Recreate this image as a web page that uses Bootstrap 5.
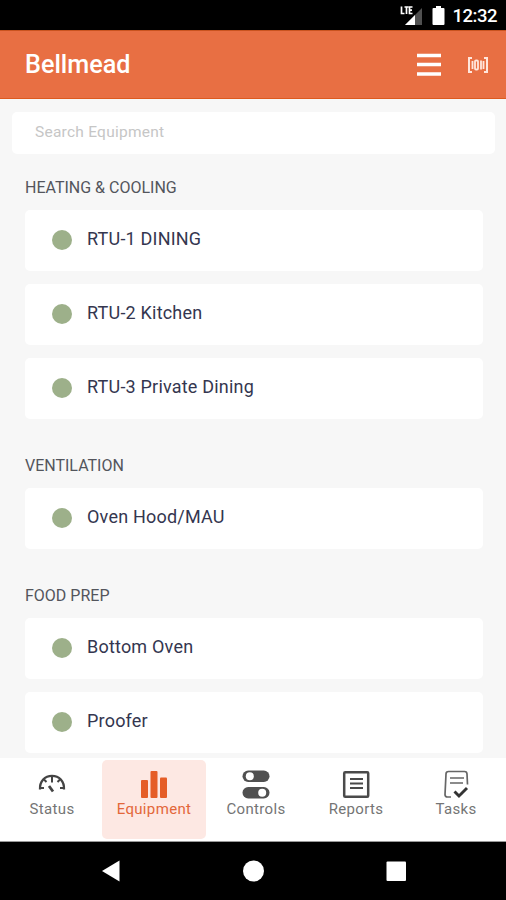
<!DOCTYPE html>
<html lang="en">
<head>
<meta charset="utf-8">
<meta name="viewport" content="width=device-width, initial-scale=1">
<title>Bellmead</title>
<link href="https://cdn.jsdelivr.net/npm/bootstrap@5.3.0/dist/css/bootstrap.min.css" rel="stylesheet">
<style>
body{font-family:Roboto,"Liberation Sans",sans-serif;background:#f7f7f7;color:#34364f}
svg{display:block;flex:none}
.screen{height:900px}
.statusbar{height:30px;background:#000;padding-right:9px}
.clock{font-size:18.5px;font-weight:500;line-height:30px;margin-left:8px;padding-top:2px;letter-spacing:-.5px}
.appbar{height:69px;background:#e86f43;border-top:1px solid #c9531f;border-bottom:1px solid #dd5a1e;padding:0 17px 0 25px}
.appbar h1{font-size:25.2px;font-weight:500;line-height:68px}
.scan{margin-left:25px}
.search{height:42px;margin:13px 11px 0 12px;padding:0 23px 3px;font-size:15.5px;letter-spacing:.25px;border:0;border-radius:5px;background:#fff;width:483px}
.search::placeholder{color:#c6c6c6;opacity:1}
.group-title{font-size:16px;line-height:44px;padding-top:2px;font-weight:400;color:#53555c}
.group{padding:0 23px 0 25px;margin-bottom:23px}
.group-first{margin-top:10px}
.rows{gap:13px}
.item{height:61px;border-radius:5px;background:#fff;padding:0 0 1px 27px}
.dot{width:20px;height:20px;border-radius:50%;background:#9db08a;margin-right:15px}
.item span{font-size:18px;letter-spacing:.2px;margin-top:-3px}
.tabs{height:84px;background:#fff;border-bottom:1px solid #999;padding-left:2px}
.tab{width:100px;padding-top:11px;font-size:15px;letter-spacing:.35px;line-height:18px;color:#757575;text-decoration:none}
.tab.active{width:104px;height:79px;margin-top:2px;padding-top:9px;border-radius:5px;background:#fde8e3;color:#e3673a}
.tab svg{margin-bottom:1px}
.sysnav{height:58px;background:#000}
</style>
<script src="https://cdn.jsdelivr.net/npm/bootstrap@5.3.0/dist/js/bootstrap.bundle.min.js"></script>
</head>
<body>
<div class="screen d-flex flex-column overflow-hidden">
  <div class="statusbar d-flex align-items-center justify-content-end text-white flex-shrink-0">
    <svg width="24" height="22" viewBox="0 0 24 22"><path d="M5 21 22 4V21Z" fill="#505050"/><path d="M5 21 15 11V21Z" fill="#fff"/><path d="M1.500 2.500V9.500H4.500M4.500 3H8.500M6.500 3V10M12.500 3H9.500V9.500H12.500M9.500 6.200H12" fill="none" stroke="#fff" stroke-width="1.700"/></svg>
    <svg class="ms-2" width="13" height="19" viewBox="0 0 13 19"><path d="M4 0H9V2H11.500Q12.500 2 12.500 3V18Q12.500 19 11.500 19H1.500Q.5 19 .5 18V3Q.5 2 1.500 2H4Z" fill="#fff"/></svg>
    <span class="clock">12:32</span>
  </div>
  <header class="appbar d-flex align-items-center text-white flex-shrink-0">
    <h1 class="m-0 me-auto">Bellmead</h1>
    <svg width="26" height="24" viewBox="0 0 26 24"><path d="M1 2.500H25M1 11.500H25M1 21H25" stroke="#fff" stroke-width="3.600"/></svg>
    <svg class="scan" width="22" height="18" viewBox="0 0 22 18" fill="none" stroke="#ffe6dc"><path d="M5 2H2V16H5M17 2H20V16H17" stroke-width="2"/><path d="M5.500 5V13M16.500 5V13M14 4.500V13.500" stroke-width="1.800"/><rect x="8" y="4.500" width="3" height="9" rx="1" stroke-width="1.800"/></svg>
  </header>
  <main class="flex-fill overflow-hidden">
    <input class="search d-block" type="text" placeholder="Search Equipment" aria-label="Search Equipment">
    <section class="group group-first">
      <h2 class="group-title m-0">HEATING &amp; COOLING</h2>
      <div class="rows d-flex flex-column">
        <div class="item d-flex align-items-center"><i class="dot"></i><span>RTU-1 DINING</span></div>
        <div class="item d-flex align-items-center"><i class="dot"></i><span>RTU-2 Kitchen</span></div>
        <div class="item d-flex align-items-center"><i class="dot"></i><span>RTU-3 Private Dining</span></div>
      </div>
    </section>
    <section class="group">
      <h2 class="group-title m-0">VENTILATION</h2>
      <div class="rows d-flex flex-column">
        <div class="item d-flex align-items-center"><i class="dot"></i><span>Oven Hood/MAU</span></div>
      </div>
    </section>
    <section class="group mb-0">
      <h2 class="group-title m-0">FOOD PREP</h2>
      <div class="rows d-flex flex-column">
        <div class="item d-flex align-items-center"><i class="dot"></i><span>Bottom Oven</span></div>
        <div class="item d-flex align-items-center"><i class="dot"></i><span>Proofer</span></div>
      </div>
    </section>
  </main>
  <nav class="tabs d-flex flex-shrink-0">
    <a class="tab d-flex flex-column align-items-center" href="#">
      <svg width="28" height="30" viewBox="0 0 28 30" fill="none" stroke="#444" stroke-width="2"><path d="M2 20.500C1.500 12 7 6.800 14 6.800S26.500 12 26 20.500" stroke-width="2.300"/><path d="M14 7V13.500M6 10.500 8.500 13M22 10.500 19.500 13M2 19H6M26 19H22"/><path d="M11 17 15 22.500" stroke-width="2.800"/></svg>
      Status</a>
    <a class="tab active d-flex flex-column align-items-center" href="#">
      <svg width="28" height="30" viewBox="0 0 28 30" fill="#e55d27"><rect x="1" y="11" width="7" height="18" rx="1"/><rect x="10.500" y="2" width="7" height="27" rx="1"/><rect x="20" y="8.500" width="7" height="20.500" rx="1"/></svg>
      Equipment</a>
    <a class="tab d-flex flex-column align-items-center" href="#">
      <svg width="28" height="30" viewBox="0 0 28 30"><rect x=".5" y="1.500" width="27" height="11.500" rx="5.700" fill="#505050"/><rect x=".5" y="18" width="27" height="11.500" rx="5.700" fill="#505050"/><circle cx="7.800" cy="7.200" r="4" fill="#fff"/><circle cx="20.200" cy="23.700" r="4" fill="#fff"/></svg>
      Controls</a>
    <a class="tab d-flex flex-column align-items-center" href="#">
      <svg width="28" height="30" viewBox="0 0 28 30" fill="none" stroke="#4a4a4a"><rect x="2.200" y="3.200" width="24" height="24.500" rx="1" stroke-width="2.500"/><path d="M8 10H21M8 14.500H21M8 19H21" stroke-width="1.900"/></svg>
      Reports</a>
    <a class="tab d-flex flex-column align-items-center" href="#">
      <svg width="28" height="30" viewBox="0 0 28 30" fill="none" stroke="#666" stroke-width="1.700"><path d="M9 28H5.500Q3 28 3 25.500L4 5Q4 2.500 6.500 2.500H22.500Q25 2.500 25 5L25.500 15.500"/><path d="M8 9H22M8 14H21"/><path d="M12.500 22.500 17 27 25 19" stroke="#333" stroke-width="2.900"/></svg>
      Tasks</a>
  </nav>
  <footer class="sysnav flex-shrink-0">
    <svg width="506" height="58" viewBox="0 0 506 58" fill="#fff"><path d="M102 29 119.500 18.500V39.500Z"/><circle cx="253.500" cy="29" r="10.500"/><rect x="386.500" y="19.500" width="19.500" height="19.500" rx="1"/></svg>
  </footer>
</div>
</body>
</html>
